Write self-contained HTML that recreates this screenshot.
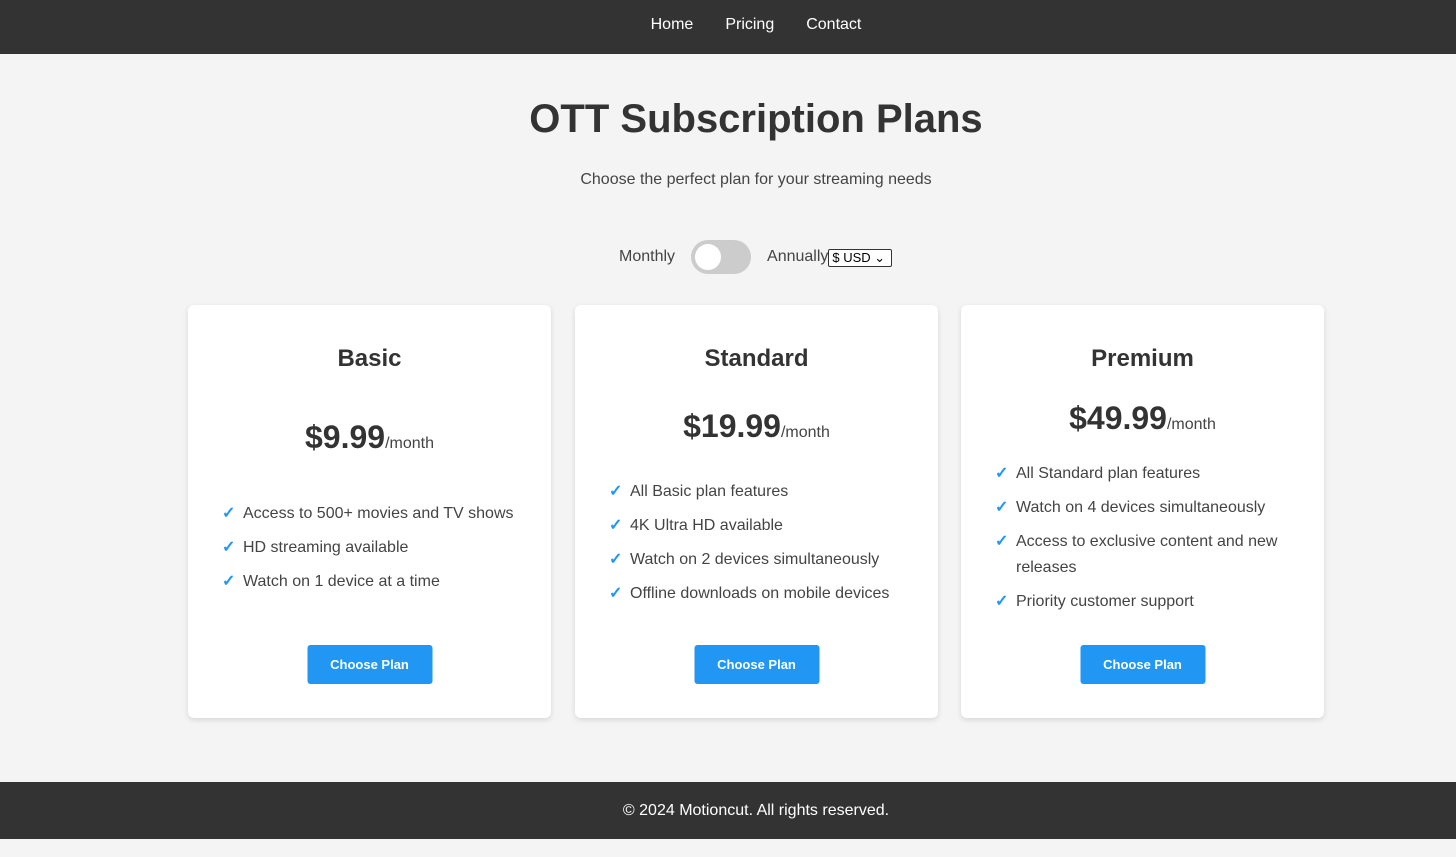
<!DOCTYPE html>
<html><head><meta charset="utf-8"><style>
*{margin:0;padding:0;box-sizing:border-box}
body{width:1456px;height:857px;background:#f4f4f4;font-family:"Liberation Sans",Arial,sans-serif;color:#333;position:relative;overflow:hidden}
nav{height:54px;background:#333;text-align:center;padding-top:16px;padding-left:56px}
nav a{color:#fff;text-decoration:none;font-size:16px;margin:0 16px}
h1{position:absolute;top:97px;left:56px;width:1400px;text-align:center;font-size:40px;font-weight:bold;color:#333}
.sub{position:absolute;top:171px;left:56px;width:1400px;text-align:center;font-size:16px;color:#444}
.tog{position:absolute;top:239px;left:619px;height:34px;display:flex;align-items:center;font-size:16px;color:#444;padding-top:2px}
.sw{width:60px;height:34px;border-radius:17px;background:#ccc;margin:0 16px 0 16px;position:relative}
.sw:after{content:"";position:absolute;left:4px;top:4px;width:26px;height:26px;border-radius:50%;background:#fff}
.sel{font-size:13px;border:1px solid #333;border-radius:2px;padding:0 3px;height:18px;line-height:16px;color:#000;background:#fff;margin-top:2px;width:64px}
.card{position:absolute;top:305px;width:363px;height:413px;background:#fff;border-radius:6px;box-shadow:0 2px 6px rgba(0,0,0,.12)}
.card h2{position:absolute;top:40px;width:100%;text-align:center;font-size:24px;font-weight:bold}
.price{position:absolute;width:100%;text-align:center;font-size:32px;font-weight:bold}
.price span{font-size:16px;font-weight:normal;color:#444}
ul{position:absolute;left:34px;right:20px;list-style:none}
li{font-size:16px;line-height:26px;padding:4px 0 4px 21px;position:relative;color:#444}
li:before{content:"✓";position:absolute;left:0;top:4px;color:#2196f3;font-weight:bold}
.btn{position:absolute;top:340px;left:50%;transform:translateX(-50%);width:125px;height:39px;background:#2196f3;color:#fff;border-radius:3px;font-size:13px;font-weight:bold;text-align:center;line-height:39px}
footer{position:absolute;top:782px;left:0;width:100%;height:57px;background:#333;color:#fff;text-align:center;font-size:16px;line-height:57px;padding-left:56px}
</style></head><body>
<nav><a>Home</a><a>Pricing</a><a>Contact</a></nav>
<h1>OTT Subscription Plans</h1>
<div class="sub">Choose the perfect plan for your streaming needs</div>
<div class="tog">Monthly<div class="sw"></div>Annually<span class="sel">$ USD ⌄</span></div>
<div class="card" style="left:188px"><h2>Basic</h2>
<div class="price" style="top:114px">$9.99<span>/month</span></div>
<ul style="top:192px"><li>Access to 500+ movies and TV shows</li><li>HD streaming available</li><li>Watch on 1 device at a time</li></ul>
<div class="btn">Choose Plan</div></div>
<div class="card" style="left:575px"><h2>Standard</h2>
<div class="price" style="top:103px">$19.99<span>/month</span></div>
<ul style="top:170px"><li>All Basic plan features</li><li>4K Ultra HD available</li><li>Watch on 2 devices simultaneously</li><li>Offline downloads on mobile devices</li></ul>
<div class="btn">Choose Plan</div></div>
<div class="card" style="left:961px"><h2>Premium</h2>
<div class="price" style="top:95px">$49.99<span>/month</span></div>
<ul style="top:152px"><li>All Standard plan features</li><li>Watch on 4 devices simultaneously</li><li>Access to exclusive content and new releases</li><li>Priority customer support</li></ul>
<div class="btn">Choose Plan</div></div>
<footer>© 2024 Motioncut. All rights reserved.</footer>
</body></html>
